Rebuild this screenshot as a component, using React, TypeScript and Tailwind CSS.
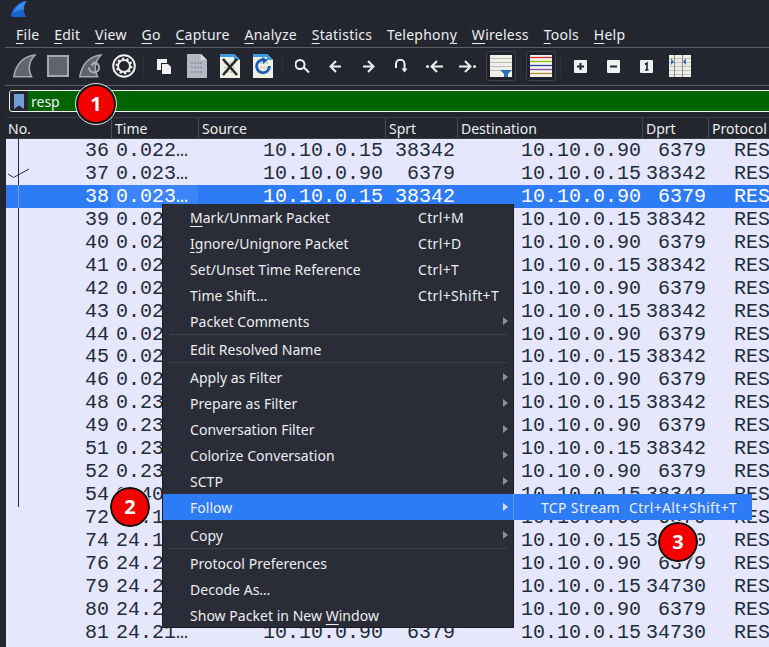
import React from "react";

const FIN = "M22 0.5 C10 2 3 10 0.8 22.2 L18.5 22.2 C14.5 14 16 6.5 22 0.5Z";

function Fin({ swirl }: { swirl?: boolean }) {
  return (
    <svg width="23" height="24" viewBox="0 0 23 23">
      <path d={FIN} fill="#5f646e" stroke="#a4a8b3" strokeWidth="1.6" />
      {swirl && (
        <path d="M10 13 a5 5 0 1 0 5 -5 M15 8 l-2.5 3 M15 8 l3 2" fill="none" stroke="#a9adb8" strokeWidth="2" />
      )}
    </svg>
  );
}

function Doc({ children, fold = "#d6d9e0", body = "#b4b8c4" }: { children?: React.ReactNode; fold?: string; body?: string }) {
  return (
    <svg width="20" height="24" viewBox="0 0 20 24">
      <path d="M0 0 H14 L20 6 V24 H0Z" fill={body} />
      <path d="M14 0 L20 6 H14Z" fill={fold} />
      {children}
    </svg>
  );
}

function Bits({ color }: { color: string }) {
  return (
    <g stroke={color} strokeWidth="1.6" strokeDasharray="2 1">
      <path d="M4 9 H16 M4 13.5 H16 M4 18 H16" />
    </g>
  );
}

function Square({ children }: { children: React.ReactNode }) {
  return (
    <svg width="13" height="13" viewBox="0 0 13 13">
      <rect width="13" height="13" rx="1" fill="#eef0f2" />
      {children}
    </svg>
  );
}

function Stroke({ d, w = 14, h = 14, box = "0 0 14 14" }: { d: string; w?: number; h?: number; box?: string }) {
  return (
    <svg width={w} height={h} viewBox={box} fill="none" stroke="#eef0f2" strokeWidth="2">
      <path d={d} />
    </svg>
  );
}

const Sep = () => (
  <div className="w-[7px] flex justify-center">
    <div className="w-px h-[22px] bg-[#2d3039]" />
  </div>
);

const Tool = ({ children }: { children: React.ReactNode }) => (
  <div className="w-[33px] h-[37px] flex items-center justify-center shrink-0">{children}</div>
);

const Toggled = ({ children }: { children: React.ReactNode }) => (
  <div className="w-[30px] h-[30px] rounded-[3px] border border-[#3c404b] bg-[#1f222a] flex items-center justify-center">{children}</div>
);

const menus: [string, string, string][] = [
  ["", "F", "ile"],
  ["", "E", "dit"],
  ["", "V", "iew"],
  ["", "G", "o"],
  ["", "C", "apture"],
  ["", "A", "nalyze"],
  ["", "S", "tatistics"],
  ["Telephon", "y", ""],
  ["", "W", "ireless"],
  ["", "T", "ools"],
  ["", "H", "elp"],
];

const Ul = ({ children }: { children: React.ReactNode }) => (
  <span className="underline decoration-1 underline-offset-[3px]">{children}</span>
);

const COLS = "grid grid-cols-[105px_87px_187px_72px_185px_66px_67px]";

type Row = [string, string, 0 | 1, string];
const rows: Row[] = [
  ["36", "0.022…", 0, "38342"],
  ["37", "0.023…", 1, "38342"],
  ["38", "0.023…", 0, "38342"],
  ["39", "0.02", 1, "38342"],
  ["40", "0.02", 0, "38342"],
  ["41", "0.02", 1, "38342"],
  ["42", "0.02", 0, "38342"],
  ["43", "0.02", 1, "38342"],
  ["44", "0.02", 0, "38342"],
  ["45", "0.02", 1, "38342"],
  ["46", "0.02", 0, "38342"],
  ["48", "0.23", 1, "38342"],
  ["49", "0.23", 0, "38342"],
  ["51", "0.23", 1, "38342"],
  ["52", "0.23", 0, "38342"],
  ["54", "0.40", 1, "38342"],
  ["72", "24.1", 0, "34730"],
  ["74", "24.1", 1, "34730"],
  ["76", "24.2", 0, "34730"],
  ["79", "24.2", 1, "34730"],
  ["80", "24.2", 0, "34730"],
  ["81", "24.21…", 1, "34730"],
];

function PacketRow({ r }: { r: Row }) {
  const sel = r[0] === "38";
  const toServer = r[2] === 0;
  return (
    <div
      className={`${COLS} h-[22.95px] leading-[21px] text-[20px] font-['Liberation_Mono',monospace] ${
        sel ? "bg-[#2e7bf6] text-white" : "text-[#1e2d3a]"
      }`}
    >
      <div className="text-right pr-[2px] pt-[1px]">{r[0]}</div>
      <div className={`pl-[5px] pt-[1px] overflow-hidden whitespace-nowrap ${sel ? "bg-[#3b85f8]" : ""}`}>{r[1]}</div>
      <div className="text-right pr-[2px] pt-[1px]">{toServer ? "10.10.0.15" : "10.10.0.90"}</div>
      <div className="text-right pr-[2px] pt-[1px]">{toServer ? r[3] : "6379"}</div>
      <div className="text-right pr-[1px] pt-[1px]">{toServer ? "10.10.0.90" : "10.10.0.15"}</div>
      <div className="text-right pr-[2px] pt-[1px]">{toServer ? "6379" : r[3]}</div>
      <div className="pl-[26px] pt-[1px] overflow-hidden">RESP</div>
    </div>
  );
}

function Item({
  children,
  shortcut,
  arrow,
  active,
}: {
  children: React.ReactNode;
  shortcut?: string;
  arrow?: boolean;
  active?: boolean;
}) {
  return (
    <div className={`h-[26px] relative flex items-center pl-[27px] ${active ? "bg-[#2e7bf6]" : ""}`}>
      <span className="whitespace-nowrap tracking-[0.03px]">{children}</span>
      {shortcut && <span className="absolute left-[255px] whitespace-nowrap tracking-[0.35px]">{shortcut}</span>}
      {arrow && (
        <svg className="absolute right-[5px]" width="5" height="8" viewBox="0 0 5 8">
          <path d="M0 0 L5 4 L0 8Z" fill={active ? "#cfe0fb" : "#8c8f99"} />
        </svg>
      )}
    </div>
  );
}

const Divider = () => <div className="h-[2px] mx-[6px] border-t border-[#3d404b]" />;

function Badge({ n, cls }: { n: string; cls: string }) {
  return (
    <div
      className={`absolute ${cls} w-[40px] h-[40px] rounded-full bg-[#f50000] border-2 border-[#111] outline outline-1 outline-[#e8e8e8] flex items-center justify-center text-white font-bold text-[20px] font-['Noto_Sans',sans-serif]`}
    >
      {n}
    </div>
  );
}

export default function App() {
  return (
    <div className="relative w-[769px] h-[647px] overflow-hidden bg-[#23262f] text-[#eceef1] font-['Noto_Sans',sans-serif] text-[14px]">
      {/* title bar */}
      <div className="h-[24px] pl-[11px] pt-[1px]">
        <svg width="16" height="16" viewBox="0 0 16 16">
          <path d="M15.5 0 C8 1 2 6 0 14 Q0 16 2 16 L15 16 C12 10 12 5 15.5 0Z" fill="#1a62cf" />
          <path d="M15.5 0 C10 1 5 5 2.5 12 C6 9 9 8 12.5 9 C12.5 6 13.5 3 15.5 0Z" fill="#3a8aee" />
        </svg>
      </div>
      {/* menu bar */}
      <div className="h-[24px] ml-[5px] pl-[11px] pb-[2px] flex items-center gap-[14.8px] border-b border-[#5a5d66] leading-none tracking-[0.25px]">
        {menus.map(([a, u, b]) => (
          <span key={a + u + b} className="whitespace-nowrap">
            {a}
            <Ul>{u}</Ul>
            {b}
          </span>
        ))}
      </div>
      {/* toolbar */}
      <div className="h-[38px] ml-[5px] pl-[3px] pb-[1px] flex items-center border-b border-[#5a5d66]">
        <Tool><Fin /></Tool>
        <Tool><div className="w-[22px] h-[22px] border-2 border-[#a4a8b3] bg-[#5f646e]" /></Tool>
        <Tool><Fin swirl /></Tool>
        <Tool>
          <svg width="24" height="24" viewBox="0 0 24 24" fill="none" stroke="#f0f0f0">
            <circle cx="12" cy="12" r="10.8" strokeWidth="2" />
            <circle cx="12" cy="12" r="6" strokeWidth="2" />
            <circle cx="12" cy="12" r="7.4" strokeWidth="2" strokeDasharray="2.2 2.45" />
          </svg>
        </Tool>
        <Sep />
        <Tool>
          <svg width="14" height="15" viewBox="0 0 14 15">
            <path d="M0 0 H10 V4 H4 V11 H0Z" fill="#f0f0f0" />
            <path d="M5 5 H11 L14 8 V15 H5Z" fill="#f0f0f0" />
          </svg>
        </Tool>
        <Tool><Doc><Bits color="#8b8f9b" /></Doc></Tool>
        <Tool>
          <Doc body="#eff0e4" fold="#3b9ae0">
            <path d="M0 0 H14 L16 3 H0Z" fill="#3b9ae0" />
            <Bits color="#c3c4b8" />
            <path d="M3 5 L17 21 M17 5 L3 21" stroke="#26272b" strokeWidth="2.6" />
          </Doc>
        </Tool>
        <Tool>
          <Doc body="#eff0e4" fold="#3b9ae0">
            <path d="M0 0 H14 L16 3 H0Z" fill="#3b9ae0" />
            <Bits color="#c3c4b8" />
            <path d="M13 6.5 A6.5 6.5 0 1 0 16.5 12" fill="none" stroke="#1b5fb4" strokeWidth="2.8" />
            <path d="M9 3 L15 6 L10 10Z" fill="#1b5fb4" />
          </Doc>
        </Tool>
        <Sep />
        <Tool><Stroke d="M9 5.5 A4.5 4.5 0 1 1 0 5.5 A4.5 4.5 0 1 1 9 5.5 M8 8 L13.5 13.5" w={15} h={15} box="-0.5 0 15 15" /></Tool>
        <Tool><Stroke d="M7 1 L1.5 6.5 L7 12 M1.5 6.5 H12" w={13} h={13} box="0 0 13 13" /></Tool>
        <Tool><Stroke d="M6 1 L11.5 6.5 L6 12 M11.5 6.5 H1" w={13} h={13} box="0 0 13 13" /></Tool>
        <Tool>
          <svg width="13" height="14" viewBox="0 0 13 14" fill="none" stroke="#eef0f2" strokeWidth="2">
            <path d="M1 9 V5 A4 4 0 0 1 9.5 5 V10" />
            <path d="M6.5 9.5 H12.5 L9.5 13.5Z" fill="#eef0f2" stroke="none" />
          </svg>
        </Tool>
        <Tool>
          <svg width="17" height="13" viewBox="0 0 17 13" fill="none" stroke="#eef0f2" strokeWidth="2">
            <circle cx="1.5" cy="6.5" r="1.5" fill="#eef0f2" stroke="none" />
            <path d="M11 1 L5.5 6.5 L11 12 M5.5 6.5 H17" />
          </svg>
        </Tool>
        <Tool>
          <svg width="17" height="13" viewBox="0 0 17 13" fill="none" stroke="#eef0f2" strokeWidth="2">
            <circle cx="15.5" cy="6.5" r="1.5" fill="#eef0f2" stroke="none" />
            <path d="M6 1 L11.5 6.5 L6 12 M11.5 6.5 H0" />
          </svg>
        </Tool>
        <Tool>
          <Toggled>
            <svg width="22" height="22" viewBox="0 0 22 22">
              <rect width="22" height="22" fill="#f1f1ea" />
              <path d="M0 3.5 H22 M0 7.5 H22 M0 11.5 H22 M0 15.5 H22" stroke="#bdbdb6" strokeWidth="1" />
              <path d="M10 15 H22 L18 19 V22 H14 V19Z" fill="#2e6db8" />
            </svg>
          </Toggled>
        </Tool>
        <Sep />
        <Tool>
          <Toggled>
            <svg width="22" height="22" viewBox="0 0 22 22">
              <rect width="22" height="22" fill="#f4f4f0" />
              <path d="M0 2.5 H22" stroke="#e02b2b" strokeWidth="1.3" />
              <path d="M0 6.5 H22" stroke="#7ec400" strokeWidth="1.3" />
              <path d="M0 10.5 H22" stroke="#2e3f9e" strokeWidth="1.3" />
              <path d="M0 14.5 H22" stroke="#8c4fa8" strokeWidth="1.3" />
              <path d="M0 18.5 H22" stroke="#b3902a" strokeWidth="1.3" />
            </svg>
          </Toggled>
        </Tool>
        <Sep />
        <Tool>
          <Square><path d="M3 6.5 H10 M6.5 3 V10" stroke="#23262f" strokeWidth="2" /></Square>
        </Tool>
        <Tool>
          <Square><path d="M3 6.5 H10" stroke="#23262f" strokeWidth="2" /></Square>
        </Tool>
        <Tool>
          <Square><path d="M5 4.5 L7 3 V10 M5 10 H8.5" stroke="#23262f" strokeWidth="1.6" fill="none" /></Square>
        </Tool>
        <Tool>
          <svg width="22" height="22" viewBox="0 0 22 22">
            <rect width="22" height="22" fill="#eeeee6" />
            <path d="M0 3.5 H22 M0 7.5 H22 M0 11.5 H22 M0 15.5 H22 M0 19.5 H22" stroke="#c2c2ba" strokeWidth="1" />
            <path d="M5.5 0 V22 M13.5 0 V22" stroke="#8a8a8a" strokeWidth="1" />
            <path d="M2 3.5 V10 L5 6.7Z M14 6.7 L17 3.5 V10Z" fill="#2e6db8" />
          </svg>
        </Tool>
      </div>
      {/* filter bar */}
      <div className="h-[31px] pt-[4px] pl-[9px] overflow-hidden">
        <div className="h-[22px] w-[770px] flex items-center border border-[#f0f0f0] rounded-l-[3px] bg-[#006400]">
          <div className="w-[18px] h-full bg-[#23262f] rounded-l-[3px] flex items-center justify-center">
            <svg width="10" height="15" viewBox="0 0 10 15">
              <path d="M0 0 H10 V15 L5 11.5 L0 15Z" fill="#6f9ed8" />
            </svg>
          </div>
          <span className="pl-[3px] pt-[1px] leading-none">resp</span>
        </div>
      </div>
      {/* packet table */}
      <div className="relative ml-[6px]">
        <div className={`${COLS} h-[22px] border-y border-[#3a3d46] leading-[21px]`}>
          {["No.", "Time", "Source", "Sprt", "Destination", "Dprt", "Protocol"].map((h, i) => (
            <div key={h} className={`overflow-hidden whitespace-nowrap ${i ? "border-l border-[#4a4d56] pl-[3px]" : "pl-[2px]"}`}>
              {h}
            </div>
          ))}
        </div>
        <div className="bg-[#e6e6fc] h-[510px]">
          {rows.map((r) => (
            <PacketRow key={r[0]} r={r} />
          ))}
        </div>
        {/* related-packet tree */}
        <svg className="absolute left-0 top-[22px]" width="30" height="370" viewBox="0 0 30 370" fill="none" stroke="#24303c" strokeWidth="1">
          <path d="M12.5 0 V46 M12.5 69 V368" />
          <path d="M12.5 46 V69" stroke="#8d97a8" />
          <path d="M2 35 L7.5 38.5 L23 30" />
        </svg>
      </div>
      {/* context menu */}
      <div className="absolute left-[162px] top-[204px] w-[352px] h-[424px] bg-[#2a2c37] border-x border-b border-[#191b21] text-[14px]">
        <Item shortcut="Ctrl+M"><Ul>M</Ul>ark/Unmark Packet</Item>
        <Item shortcut="Ctrl+D"><Ul>I</Ul>gnore/Unignore Packet</Item>
        <Item shortcut="Ctrl+T">Set/Unset Time Reference</Item>
        <Item shortcut="Ctrl+Shift+T">Time Shift…</Item>
        <Item arrow>Packet Comments</Item>
        <Divider />
        <Item>Edit Resolved Name</Item>
        <Divider />
        <Item arrow>Apply as Filter</Item>
        <Item arrow>Prepare as Filter</Item>
        <Item arrow>Conversation Filter</Item>
        <Item arrow>Colorize Conversation</Item>
        <Item arrow>SCTP</Item>
        <Item arrow active>Follow</Item>
        <div className="h-[2px]" />
        <Item arrow>Copy</Item>
        <Divider />
        <Item>Protocol Preferences</Item>
        <Item>Decode As…</Item>
        <Item>Show Packet in New <Ul>W</Ul>indow</Item>
      </div>
      {/* sub menu */}
      <div className="absolute left-[513px] top-[494px] w-[239px] h-[26px] bg-[#2e7bf6] border-l border-[#5c97f5] pl-[27px] flex items-center whitespace-nowrap tracking-[0.35px]">
        <span className="w-[88px]">TCP Stream</span>
        <span>Ctrl+Alt+Shift+T</span>
      </div>
      {/* callouts */}
      <Badge n="1" cls="left-[76px] top-[84px]" />
      <Badge n="2" cls="left-[110px] top-[487px]" />
      <Badge n="3" cls="left-[658px] top-[522px]" />
    </div>
  );
}
